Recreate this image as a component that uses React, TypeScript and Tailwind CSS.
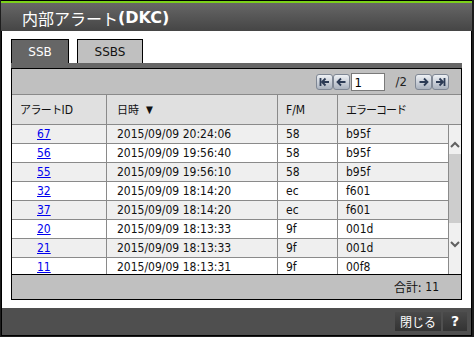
import React from 'react';

const rows = [
  { id: '67', time: '2015/09/09 20:24:06', fm: '58', code: 'b95f' },
  { id: '56', time: '2015/09/09 19:56:40', fm: '58', code: 'b95f' },
  { id: '55', time: '2015/09/09 19:56:10', fm: '58', code: 'b95f' },
  { id: '32', time: '2015/09/09 18:14:20', fm: 'ec', code: 'f601' },
  { id: '37', time: '2015/09/09 18:14:20', fm: 'ec', code: 'f601' },
  { id: '20', time: '2015/09/09 18:13:33', fm: '9f', code: '001d' },
  { id: '21', time: '2015/09/09 18:13:33', fm: '9f', code: '001d' },
  { id: '11', time: '2015/09/09 18:13:31', fm: '9f', code: '00f8' },
];

const font = { fontFamily: '"DejaVu Sans", "Noto Sans CJK JP", sans-serif' };
const narrow = { fontFamily: '"DejaVu Sans Condensed", "Open Sans", "Noto Sans CJK JP", sans-serif' };
const jp = { fontFamily: '"Noto Sans CJK JP", sans-serif' };

const PagerBtn = ({ children }: { children: React.ReactNode }) => (
  <div className="w-[17px] h-[16px] flex items-center justify-center bg-gradient-to-b from-[#eef1f5] to-[#aab2be] border border-[#7f8794] rounded-[3px]">
    {children}
  </div>
);

const ArrowIcon = ({ dir, bar }: { dir: 'l' | 'r'; bar?: boolean }) => (
  <svg width="11" height="10" viewBox="0 0 11 10" fill="none" stroke="#2c3b55" strokeWidth="1.8">
    {dir === 'l' ? (
      <>
        {bar && <path d="M1.5 1v8" />}
        <path d={bar ? 'M6.5 1.5L3 5l3.5 3.5M3 5h7' : 'M5 1.5L1.5 5 5 8.5M1.5 5h8'} />
      </>
    ) : (
      <>
        {bar && <path d="M9.5 1v8" />}
        <path d={bar ? 'M4.5 1.5L8 5 4.5 8.5M8 5H1' : 'M6 1.5L9.5 5 6 8.5M9.5 5h-8'} />
      </>
    )}
  </svg>
);

const App = () => {
  return (
    <div className="w-[474px] h-[337px] bg-[#1d1d1d] overflow-hidden" style={font}>
      <div className="ml-[1px] w-[471px] h-[336px] border-t border-black flex flex-col">
        {/* title bar */}
        <div className="h-[30px] border-t-2 border-[#7cd11a] bg-gradient-to-b from-[#676767] to-[#454545] flex items-center pl-[21px] pt-[1px]">
          <span className="text-white text-[16px] leading-none" style={jp}>
            内部アラート
          </span>
          <span className="text-white text-[16px] font-bold leading-none">(DKC)</span>
        </div>

        {/* body */}
        <div className="flex-1 bg-white border-l border-r border-black px-[9px] pt-[8px] pb-[8px] flex flex-col">
          {/* tabs */}
          <div className="flex gap-[8px] h-[24px]">
            <div className="w-[58px] bg-[#666666] border border-b-0 border-black text-white text-[12px] flex items-center justify-center">
              SSB
            </div>
            <div className="w-[66px] bg-[#c0c0c0] border border-b-0 border-black text-[#111] text-[12px] flex items-center justify-center">
              SSBS
            </div>
          </div>
          <div className="h-[5px] bg-[#666666]" />

          {/* panel */}
          <div className="flex-1 border border-black flex flex-col">
            {/* pager */}
            <div className="h-[26px] bg-[#c0c0c0] border-b border-[#8a8a8a] flex items-center justify-end pr-[12px]" style={narrow}>
              <div className="flex items-center">
                <PagerBtn><ArrowIcon dir="l" bar /></PagerBtn>
                <PagerBtn><ArrowIcon dir="l" /></PagerBtn>
                <div className="ml-[1px] w-[34px] h-[18px] bg-white border border-[#7a7a7a] text-[13px] text-black leading-[17px] pl-[3px]">
                  1
                </div>
                <span className="ml-[11px] mr-[8px] text-[13px] text-[#222]">/2</span>
                <PagerBtn><ArrowIcon dir="r" /></PagerBtn>
                <PagerBtn><ArrowIcon dir="r" bar /></PagerBtn>
              </div>
            </div>

            {/* header */}
            <div className="h-[30px] bg-[#e0e0e0] border-b border-[#8a8a8a] flex text-[12px] text-[#111]" style={narrow}>
              <div className="w-[95px] border-r border-[#8a8a8a] flex items-center pl-[8px]">
                <span className="text-[11px] tracking-[-0.6px]" style={jp}>アラート</span>
                <span>ID</span>
              </div>
              <div className="w-[171px] border-r border-[#8a8a8a] flex items-center pl-[10px]">
                <span className="text-[11px]" style={jp}>日時</span>
                <span className="ml-[7px] text-[10px]">▼</span>
              </div>
              <div className="w-[60px] border-r border-[#8a8a8a] flex items-center pl-[8px]">F/M</div>
              <div className="flex-1 flex items-center pl-[8px] text-[11px] tracking-[-1px]" style={jp}>
                エラーコード
              </div>
            </div>

            {/* rows + scrollbar */}
            <div className="h-[149px] flex overflow-hidden" style={narrow}>
              <div className="w-[437px] border-r border-[#8a8a8a]">
                {rows.map((r, i) => (
                  <div
                    key={r.id + i}
                    className={`h-[19px] flex text-[12px] text-[#111] border-b border-[#8a8a8a] ${i % 2 === 0 ? 'bg-[#efefef]' : 'bg-white'}`}
                  >
                    <div className="w-[95px] border-r border-[#8a8a8a] flex items-center pl-[25px]">
                      <a className="text-[#0000ee] underline">{r.id}</a>
                    </div>
                    <div className="w-[171px] border-r border-[#8a8a8a] flex items-center pl-[10px]">{r.time}</div>
                    <div className="w-[60px] border-r border-[#8a8a8a] flex items-center pl-[8px]">{r.fm}</div>
                    <div className="flex-1 flex items-center pl-[8px]">{r.code}</div>
                  </div>
                ))}
              </div>
              <div className="flex-1 bg-[#f0f0f0] flex flex-col items-center">
                <svg className="mt-[16px]" width="10" height="7" viewBox="0 0 10 7" fill="none" stroke="#606060" strokeWidth="2">
                  <path d="M1 6l4-4 4 4" />
                </svg>
                <div className="mt-[6px] w-full h-[69px] bg-[#cdcdcd]" />
                <svg className="mt-[18px]" width="10" height="7" viewBox="0 0 10 7" fill="none" stroke="#606060" strokeWidth="2">
                  <path d="M1 1l4 4 4-4" />
                </svg>
              </div>
            </div>

            {/* footer */}
            <div className="flex-1 bg-[#c0c0c0] border-t border-black flex items-center justify-end pr-[22px] text-[12px] text-[#111]" style={narrow}>
              <span style={jp}>合計:</span>
              <span className="ml-[4px]">11</span>
            </div>
          </div>
        </div>

        {/* bottom bar */}
        <div className="h-[28px] bg-[#4f4f4f] border-l border-r border-b border-black flex items-center justify-end gap-[2px] pr-[4px]">
          <div className="w-[46px] h-[19px] bg-gradient-to-b from-[#4a4a4a] to-[#333333] text-white text-[12px] flex items-center justify-center" style={jp}>
            閉じる
          </div>
          <div className="w-[24px] h-[19px] bg-gradient-to-b from-[#4a4a4a] to-[#333333] text-white text-[14px] font-bold flex items-center justify-center">
            ?
          </div>
        </div>
      </div>
    </div>
  );
};

export default App;
